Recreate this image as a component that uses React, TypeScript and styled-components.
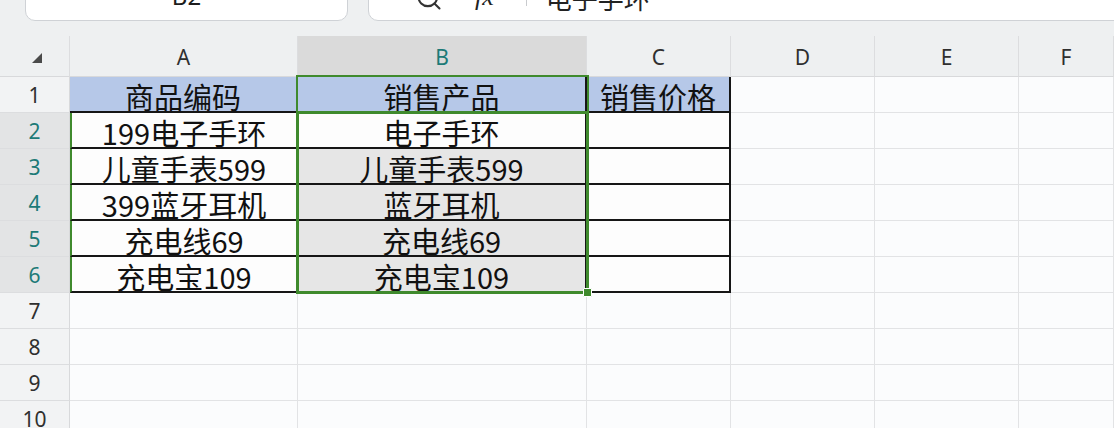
import styled, { createGlobalStyle } from 'styled-components';
import { Search } from 'lucide-react';

const GREEN = '#3f8a2d';
const TEAL = '#1d7a77';

const columns = ['A', 'B', 'C', 'D', 'E', 'F'];
const widths = [228, 289, 144, 144, 144, 95];

const data: Record<number, string[]> = {
  1: ['商品编码', '销售产品', '销售价格'],
  2: ['199电子手环', '电子手环', ''],
  3: ['儿童手表599', '儿童手表599', ''],
  4: ['399蓝牙耳机', '蓝牙耳机', ''],
  5: ['充电线69', '充电线69', ''],
  6: ['充电宝109', '充电宝109', ''],
};

const rows = [1, 2, 3, 4, 5, 6, 7, 8, 9, 10];

const cellFill = (row: number, col: number) => {
  if (row === 1 && col < 3) return '#b6c8e8';
  if (col === 1 && row >= 3 && row <= 6) return '#e6e6e6';
  if (row <= 6 && col < 3) return '#fdfdfd';
  return '#fbfcfd';
};

const App = () => {
  return (
    <>
      <GlobalStyle />
      <Page>
        <TopBar>
          <NameBox>B2</NameBox>
          <FormulaBox>
            <Search size={28} strokeWidth={1.8} color="#333" />
            <Fx>fx</Fx>
            <Divider />
            <FormulaText>电子手环</FormulaText>
          </FormulaBox>
        </TopBar>
        <Sheet>
          <Corner>
            <CornerMark />
          </Corner>
          {columns.map((c, i) => (
            <ColHead key={c} $c={i} $active={i === 1}>
              {c}
            </ColHead>
          ))}
          {rows.map((r) => (
            <Row key={r} r={r} />
          ))}
          <RangeLine $row="2 / 3" $col="3 / 4" $width={2} />
          <RangeLine $row="3 / 8" $col="3 / 4" $width={3}>
            <Handle />
          </RangeLine>
        </Sheet>
      </Page>
    </>
  );
};

const Row = ({ r }: { r: number }) => {
  const inRange = r >= 2 && r <= 6;
  return (
    <>
      <RowHead $r={r} $active={inRange}>
        {r}
      </RowHead>
      {columns.map((c, i) => {
        const table = r <= 6 && i < 3;
        return (
          <Cell
            key={c}
            $r={r}
            $c={i}
            $fill={cellFill(r, i)}
            $line={table ? '#161616' : '#e2e3e5'}
            $thick={table}
            $mark={i === 0 && inRange}
          >
            {data[r]?.[i] ?? ''}
          </Cell>
        );
      })}
    </>
  );
};

export default App;

const GlobalStyle = createGlobalStyle`
  body {
    margin: 0;
    background: #eef0f1;
    overflow: hidden;
  }
`;

const Page = styled.div`
  width: 1114px;
  height: 428px;
  overflow: hidden;
  display: flex;
  flex-direction: column;
  background: #eef0f1;
`;

const TopBar = styled.div`
  height: 21px;
  flex: none;
  overflow: hidden;
  display: flex;
  align-items: flex-end;
  gap: 20px;
  padding-left: 25px;
`;

const NameBox = styled.div`
  width: 323px;
  height: 46px;
  flex: none;
  box-sizing: border-box;
  background: #fff;
  border: 1px solid #cfd2d6;
  border-radius: 10px;
  display: grid;
  place-items: center;
  font-family: 'Noto Sans', sans-serif;
  font-size: 24px;
  line-height: 30px;
  color: #1d1d1d;
  padding-bottom: 4px;
`;

const FormulaBox = styled.div`
  flex: 1;
  height: 46px;
  margin-right: -20px;
  box-sizing: border-box;
  background: #fff;
  border: 1px solid #cfd2d6;
  border-radius: 10px;
  display: flex;
  align-items: center;
  padding: 0 0 2px 46px;

  svg {
    flex: none;
    margin-top: 2px;
  }
`;

const Fx = styled.span`
  font-family: 'Liberation Serif', serif;
  font-style: italic;
  font-size: 26px;
  color: #222;
  margin-left: 32px;
`;

const Divider = styled.span`
  width: 1px;
  height: 32px;
  background: #c9cbce;
  margin: -14px 0 0 32px;
`;

const FormulaText = styled.span`
  font-family: 'Noto Sans CJK SC', sans-serif;
  font-size: 26px;
  color: #222;
  margin-left: 19px;
`;

const Sheet = styled.div`
  margin-top: 15px;
  display: grid;
  grid-template-columns: 70px ${widths.map((w) => `${w}px`).join(' ')};
  grid-template-rows: 41px repeat(10, 36px);
  font-family: 'Noto Sans CJK SC', sans-serif;
`;

const Corner = styled.div`
  grid-row: 1;
  grid-column: 1;
  display: flex;
  align-items: center;
  justify-content: center;
  border-right: 1px solid #dcdddf;
  border-bottom: 1px solid #d8d9db;
`;

const CornerMark = styled.span`
  width: 0;
  height: 0;
  border-left: 10px solid transparent;
  border-bottom: 10px solid #4a4a4a;
  margin: 4px 0 0 4px;
`;

const ColHead = styled.div<{ $c: number; $active: boolean }>`
  grid-row: 1;
  grid-column: ${(p) => p.$c + 2};
  display: grid;
  place-items: center;
  box-sizing: border-box;
  padding-top: 2px;
  background: ${(p) => (p.$active ? '#dadada' : '#eef0f1')};
  border-right: 1px solid #dcdddf;
  border-bottom: 1px solid #d8d9db;
  font-family: 'Noto Sans', sans-serif;
  font-size: 21px;
  color: ${(p) => (p.$active ? TEAL : '#2f2f2f')};
`;

const RowHead = styled.div<{ $r: number; $active: boolean }>`
  grid-row: ${(p) => p.$r + 1};
  grid-column: 1;
  display: grid;
  place-items: center;
  box-sizing: border-box;
  background: ${(p) => (p.$active ? '#e3e4e5' : '#f2f3f4')};
  border-right: 1px solid #d8d9db;
  border-bottom: 1px solid #dcdddf;
  font-family: 'Noto Sans', sans-serif;
  font-size: 21px;
  color: ${(p) => (p.$active ? TEAL : '#2f2f2f')};
`;

const Cell = styled.div<{
  $r: number;
  $c: number;
  $fill: string;
  $line: string;
  $thick: boolean;
  $mark: boolean;
}>`
  grid-row: ${(p) => p.$r + 1};
  grid-column: ${(p) => p.$c + 2};
  box-sizing: border-box;
  background: ${(p) => p.$fill};
  border-right: ${(p) => (p.$thick ? 2 : 1)}px solid ${(p) => p.$line};
  border-bottom: ${(p) => (p.$thick ? 2 : 1)}px solid ${(p) => p.$line};
  border-left: ${(p) => (p.$mark ? `2px solid ${GREEN}` : 'none')};
  display: flex;
  align-items: center;
  justify-content: center;
  overflow: visible;
  white-space: nowrap;
  font-size: 29px;
  line-height: 36px;
  padding-top: 3px;
  color: #111;
`;

const RangeLine = styled.div<{ $row: string; $col: string; $width: number }>`
  grid-row: ${(p) => p.$row};
  grid-column: ${(p) => p.$col};
  z-index: 2;
  position: relative;
  pointer-events: none;
  border: ${(p) => p.$width}px solid ${GREEN};
  margin: -2px -2px -1px -2px;
`;

const Handle = styled.span`
  position: absolute;
  right: -6px;
  bottom: -6px;
  width: 7px;
  height: 7px;
  background: ${GREEN};
  border: 1px solid #fff;
  border-radius: 1px;
`;
